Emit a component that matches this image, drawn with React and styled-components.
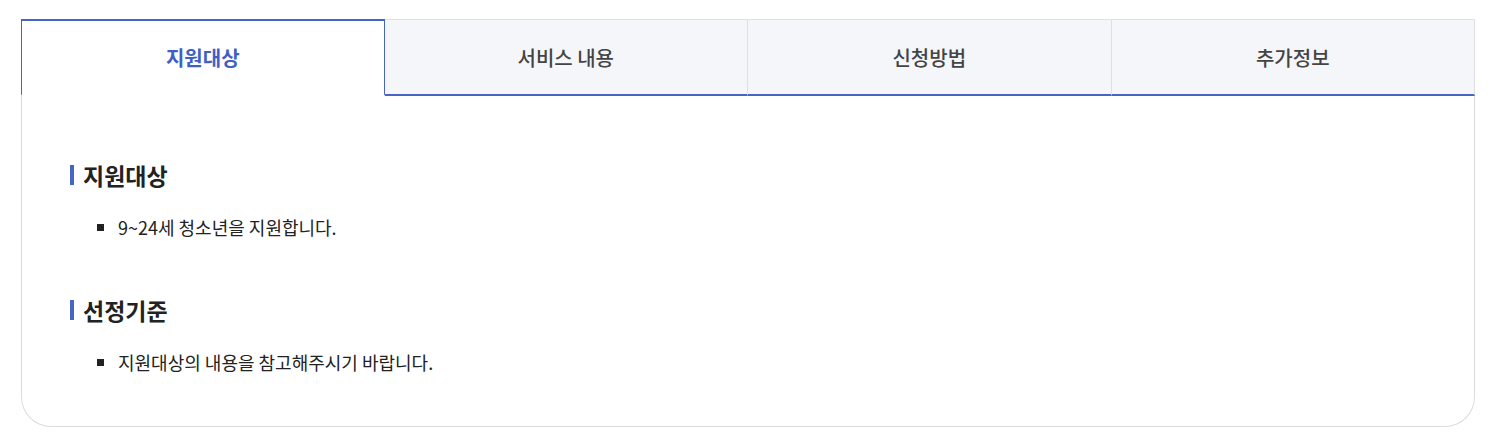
import React, { useState } from "react";
import styled, { createGlobalStyle } from "styled-components";

const GlobalStyle = createGlobalStyle`
  body {
    margin: 0;
    background: #fff;
    font-family: "Noto Sans CJK KR", "Noto Sans", sans-serif;
    color: #222;
  }
`;

const Page = styled.div`
  padding: 19px 20px 18px 21px;
`;

const TabList = styled.ul`
  display: grid;
  grid-template-columns: repeat(4, 1fr);
  margin: 0;
  padding: 0;
  list-style: none;
`;

const Tab = styled.li`
  height: 77px;
  box-sizing: border-box;
  display: flex;
  align-items: center;
  justify-content: center;
  font-size: 20px;
  cursor: pointer;
  background: ${(p) => (p.$active ? "#fff" : "#f5f6fa")};
  color: ${(p) => (p.$active ? "#3f5fc6" : "#444")};
  font-weight: ${(p) => (p.$active ? 700 : 500)};
  border-top: ${(p) => (p.$active ? "2px solid #4766c3" : "1px solid #dfe0e4")};
  border-bottom: ${(p) => (p.$active ? "2px solid transparent" : "2px solid #4766c3")};
  border-left: ${(p) => (p.$active ? "1px solid #4766c3" : "none")};
  border-right: ${(p) => (p.$active ? "1px solid #4766c3" : "1px solid #dfe0e4")};
  padding-top: ${(p) => (p.$active ? "0" : "1px")};
  &:last-child {
    border-right: 1px solid #dfe0e4;
  }
`;

const Panel = styled.div`
  border: 1px solid #dcdcdc;
  border-top: none;
  border-radius: 0 0 30px 30px;
  padding: 63px 48px 49px;
`;

const Section = styled.section`
  & + & {
    margin-top: 52px;
  }
`;

const Heading = styled.h3`
  display: flex;
  align-items: center;
  gap: 9px;
  margin: 0 0 21px;
  font-size: 23px;
  font-weight: 700;
  color: #222;
  line-height: 32px;
  &::before {
    content: "";
    width: 4px;
    height: 20px;
    background: #4766c3;
  }
`;

const List = styled.ul`
  margin: 0;
  padding: 0 0 0 27px;
  list-style: none;
`;

const Item = styled.li`
  position: relative;
  padding-left: 21px;
  font-size: 18px;
  line-height: 30px;
  color: #222;
  &::before {
    content: "";
    position: absolute;
    left: 0;
    top: 12px;
    width: 7px;
    height: 7px;
    background: #222;
  }
`;

const tabs = ["지원대상", "서비스 내용", "신청방법", "추가정보"];

const sections = [
  { title: "지원대상", items: ["9~24세 청소년을 지원합니다."] },
  { title: "선정기준", items: ["지원대상의 내용을 참고해주시기 바랍니다."] },
];

export default function App() {
  const [active, setActive] = useState(0);
  return (
    <>
      <GlobalStyle />
      <Page>
        <TabList>
          {tabs.map((t, i) => (
            <Tab key={t} $active={i === active} onClick={() => setActive(i)}>
              {t}
            </Tab>
          ))}
        </TabList>
        <Panel>
          {sections.map((s) => (
            <Section key={s.title}>
              <Heading>{s.title}</Heading>
              <List>
                {s.items.map((it) => (
                  <Item key={it}>{it}</Item>
                ))}
              </List>
            </Section>
          ))}
        </Panel>
      </Page>
    </>
  );
}
